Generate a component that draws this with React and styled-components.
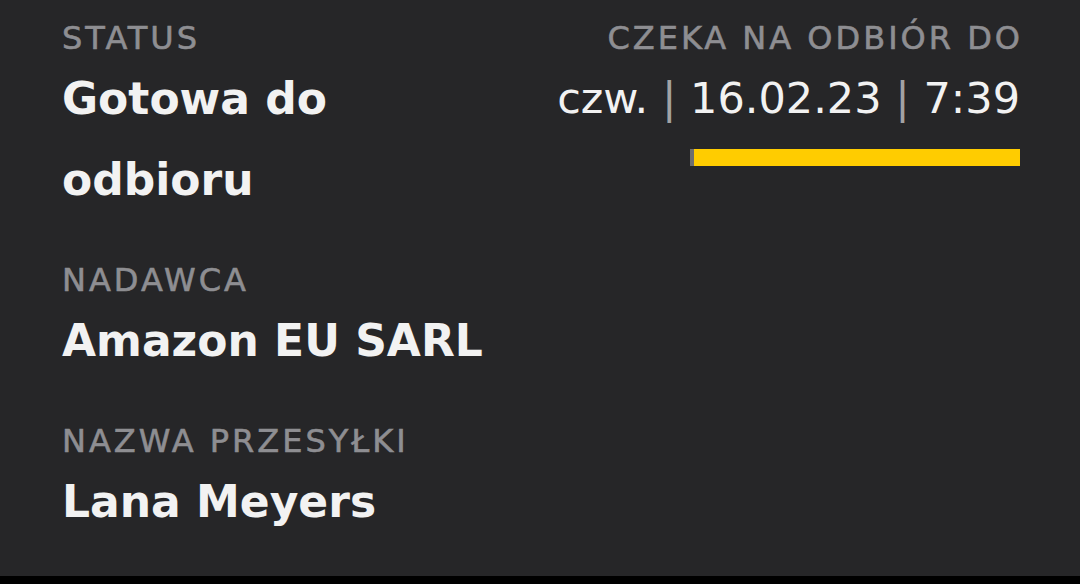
import React from 'react';
import styled, { createGlobalStyle } from 'styled-components';

const GlobalStyle = createGlobalStyle`
  html, body {
    margin: 0;
    padding: 0;
    background: #000000;
  }
  body {
    font-family: "DejaVu Sans", "Liberation Sans", sans-serif;
    -webkit-font-smoothing: antialiased;
  }
`;

const Panel = styled.div`
  background: #262628;
  padding: 18px 60px 34px 62px;
  display: flex;
  flex-direction: column;
  gap: 40px;
  color: #f2f2f2;
`;

const Row = styled.div`
  display: flex;
  justify-content: space-between;
  gap: 40px;
`;

const Field = styled.div`
  display: flex;
  flex-direction: column;
  flex: ${props => (props.fixed ? 'none' : '1')};
  min-width: 0;
  align-items: ${props => (props.right ? 'flex-end' : 'flex-start')};
  text-align: ${props => (props.right ? 'right' : 'left')};
`;

const Label = styled.div`
  font-size: 32px;
  line-height: 40px;
  letter-spacing: 3px;
  color: #8e8e92;
  text-transform: uppercase;
  white-space: nowrap;
  -webkit-text-stroke: 0.6px #8e8e92;
  margin-right: ${props => (props.right ? '-3px' : '0')};
`;

const Value = styled.div`
  font-size: 44px;
  line-height: 81px;
  font-weight: 700;
  color: #f2f2f2;
`;

const DateLine = styled.div`
  font-size: 43px;
  line-height: 81px;
  font-weight: 400;
  color: #f2f2f2;
  white-space: nowrap;
`;

const Pipe = styled.span`
  color: #a2a2a4;
`;

const Track = styled.div`
  margin-top: 10px;
  width: 330px;
  height: 17px;
  background: #6e6e70;
  display: flex;
  justify-content: flex-end;
`;

const Fill = styled.div`
  height: 100%;
  background: #ffcc00;
`;

export default function App() {
  const remaining = 98.8;
  return (
    <>
      <GlobalStyle />
      <Panel>
        <Row>
          <Field>
            <Label>Status</Label>
            <Value>Gotowa do odbioru</Value>
          </Field>
          <Field right fixed>
            <Label right>Czeka na odbiór do</Label>
            <DateLine>
              czw. <Pipe>|</Pipe> 16.02.23 <Pipe>|</Pipe> 7:39
            </DateLine>
            <Track>
              <Fill style={{ width: `${remaining}%` }} />
            </Track>
          </Field>
        </Row>
        <Field>
          <Label>Nadawca</Label>
          <Value>Amazon EU SARL</Value>
        </Field>
        <Field>
          <Label>Nazwa przesyłki</Label>
          <Value>Lana Meyers</Value>
        </Field>
      </Panel>
    </>
  );
}
